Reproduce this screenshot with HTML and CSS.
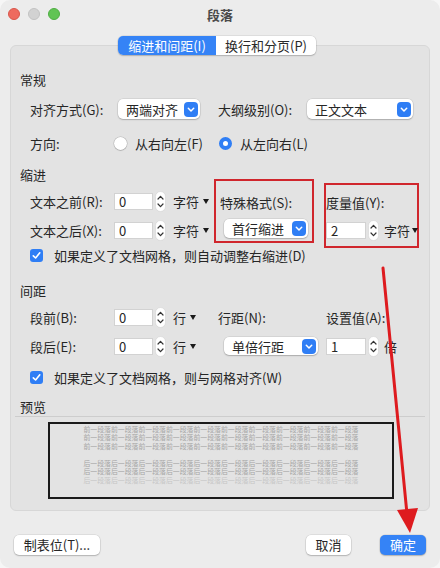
FILE: index.html
```html
<!DOCTYPE html>
<html lang="zh-CN">
<head>
    <meta charset="UTF-8">
    <meta name="viewport" content="width=device-width, initial-scale=1.0">
    <title>段落</title>
    <link rel="stylesheet" href="styles.css">
</head>
<body>
    <div class="window">
        <div class="titlebar">
            <div class="lights">
                <span class="light red"></span>
                <span class="light gray"></span>
                <span class="light green"></span>
            </div>
            <div class="title">段落</div>
            <div></div>
        </div>

        <div class="tabs">
            <div class="segmented">
                <span class="tab active">缩进和间距(I)</span>
                <span class="tab">换行和分页(P)</span>
            </div>
        </div>

        <div class="panel">
            <div class="heading first">常规</div>
            <div class="row">
                <span class="lbl">对齐方式(G):</span>
                <div class="select sel-align">
                    <span>两端对齐</span>
                    <svg class="sel-btn" width="14" height="15" viewBox="0 0 14 15"><rect width="14" height="15" rx="4" fill="#2f7ef5"/><path d="M4.3 6.3 L7 9 L9.7 6.3" fill="none" stroke="#fff" stroke-width="1.5" stroke-linecap="round" stroke-linejoin="round"/></svg>
                </div>
                <span class="lbl-mid">大纲级别(O):</span>
                <div class="select sel-outline">
                    <span>正文文本</span>
                    <svg class="sel-btn" width="14" height="15" viewBox="0 0 14 15"><rect width="14" height="15" rx="4" fill="#2f7ef5"/><path d="M4.3 6.3 L7 9 L9.7 6.3" fill="none" stroke="#fff" stroke-width="1.5" stroke-linecap="round" stroke-linejoin="round"/></svg>
                </div>
            </div>
            <div class="row row-dir">
                <span class="lbl">方向:</span>
                <label class="option opt-first"><span class="radio"></span>从右向左(F)</label>
                <label class="option"><span class="radio on"></span>从左向右(L)</label>
            </div>

            <div class="heading tight">缩进</div>
            <div class="indent">
                <div class="stack">
                    <div class="field">
                        <span class="lbl">文本之前(R):</span>
                        <span class="num">0</span>
                        <svg class="stepper" width="11" height="21" viewBox="0 0 11 21"><rect x="0.5" y="0.5" width="10" height="20" rx="5" fill="#fff" stroke="#d4d4d4" stroke-width="0.6"/><path d="M3 8 L5.5 5.3 L8 8" fill="none" stroke="#333" stroke-width="1.2" stroke-linecap="round" stroke-linejoin="round"/><path d="M3 13 L5.5 15.7 L8 13" fill="none" stroke="#333" stroke-width="1.2" stroke-linecap="round" stroke-linejoin="round"/></svg>
                        <span class="unit">字符</span><span class="caret"></span>
                    </div>
                    <div class="field">
                        <span class="lbl">文本之后(X):</span>
                        <span class="num">0</span>
                        <svg class="stepper" width="11" height="21" viewBox="0 0 11 21"><rect x="0.5" y="0.5" width="10" height="20" rx="5" fill="#fff" stroke="#d4d4d4" stroke-width="0.6"/><path d="M3 8 L5.5 5.3 L8 8" fill="none" stroke="#333" stroke-width="1.2" stroke-linecap="round" stroke-linejoin="round"/><path d="M3 13 L5.5 15.7 L8 13" fill="none" stroke="#333" stroke-width="1.2" stroke-linecap="round" stroke-linejoin="round"/></svg>
                        <span class="unit">字符</span><span class="caret"></span>
                    </div>
                </div>
                <div class="mark mark-special">
                    <div class="field">特殊格式(S):</div>
                    <div class="select sel-special">
                        <span>首行缩进</span>
                        <svg class="sel-btn" width="14" height="15" viewBox="0 0 14 15"><rect width="14" height="15" rx="4" fill="#2f7ef5"/><path d="M4.3 6.3 L7 9 L9.7 6.3" fill="none" stroke="#fff" stroke-width="1.5" stroke-linecap="round" stroke-linejoin="round"/></svg>
                    </div>
                </div>
                <div class="mark mark-value">
                    <div class="field">度量值(Y):</div>
                    <div class="field field-gap">
                        <span class="num num-wide">2</span>
                        <svg class="stepper" width="11" height="21" viewBox="0 0 11 21"><rect x="0.5" y="0.5" width="10" height="20" rx="5" fill="#fff" stroke="#d4d4d4" stroke-width="0.6"/><path d="M3 8 L5.5 5.3 L8 8" fill="none" stroke="#333" stroke-width="1.2" stroke-linecap="round" stroke-linejoin="round"/><path d="M3 13 L5.5 15.7 L8 13" fill="none" stroke="#333" stroke-width="1.2" stroke-linecap="round" stroke-linejoin="round"/></svg>
                        <span class="unit unit-tight">字符</span><span class="caret caret-tight"></span>
                    </div>
                </div>
            </div>
            <label class="check-row">
                <svg class="check" width="13" height="13" viewBox="0 0 13 13"><rect width="13" height="13" rx="3" fill="#2f7ef5"/><path d="M3.3 6.8 L5.6 9 L9.8 3.8" fill="none" stroke="#fff" stroke-width="1.6" stroke-linecap="round" stroke-linejoin="round"/></svg>
                如果定义了文档网格，则自动调整右缩进(D)
            </label>

            <div class="heading spaced">间距</div>
            <div class="spacing">
                <div class="stack">
                    <div class="field">
                        <span class="lbl">段前(B):</span>
                        <span class="num">0</span>
                        <svg class="stepper" width="11" height="21" viewBox="0 0 11 21"><rect x="0.5" y="0.5" width="10" height="20" rx="5" fill="#fff" stroke="#d4d4d4" stroke-width="0.6"/><path d="M3 8 L5.5 5.3 L8 8" fill="none" stroke="#333" stroke-width="1.2" stroke-linecap="round" stroke-linejoin="round"/><path d="M3 13 L5.5 15.7 L8 13" fill="none" stroke="#333" stroke-width="1.2" stroke-linecap="round" stroke-linejoin="round"/></svg>
                        <span class="unit">行</span><span class="caret"></span>
                    </div>
                    <div class="field">
                        <span class="lbl">段后(E):</span>
                        <span class="num">0</span>
                        <svg class="stepper" width="11" height="21" viewBox="0 0 11 21"><rect x="0.5" y="0.5" width="10" height="20" rx="5" fill="#fff" stroke="#d4d4d4" stroke-width="0.6"/><path d="M3 8 L5.5 5.3 L8 8" fill="none" stroke="#333" stroke-width="1.2" stroke-linecap="round" stroke-linejoin="round"/><path d="M3 13 L5.5 15.7 L8 13" fill="none" stroke="#333" stroke-width="1.2" stroke-linecap="round" stroke-linejoin="round"/></svg>
                        <span class="unit">行</span><span class="caret"></span>
                    </div>
                </div>
                <div class="stack col-line">
                    <div class="field">行距(N):</div>
                    <div class="field">
                        <div class="select sel-line">
                            <span>单倍行距</span>
                            <svg class="sel-btn" width="14" height="15" viewBox="0 0 14 15"><rect width="14" height="15" rx="4" fill="#2f7ef5"/><path d="M4.3 6.3 L7 9 L9.7 6.3" fill="none" stroke="#fff" stroke-width="1.5" stroke-linecap="round" stroke-linejoin="round"/></svg>
                        </div>
                    </div>
                </div>
                <div class="stack col-value">
                    <div class="field">设置值(A):</div>
                    <div class="field">
                        <span class="num num-wide">1</span>
                        <svg class="stepper" width="11" height="21" viewBox="0 0 11 21"><rect x="0.5" y="0.5" width="10" height="20" rx="5" fill="#fff" stroke="#d4d4d4" stroke-width="0.6"/><path d="M3 8 L5.5 5.3 L8 8" fill="none" stroke="#333" stroke-width="1.2" stroke-linecap="round" stroke-linejoin="round"/><path d="M3 13 L5.5 15.7 L8 13" fill="none" stroke="#333" stroke-width="1.2" stroke-linecap="round" stroke-linejoin="round"/></svg>
                        <span class="unit unit-tight">倍</span>
                    </div>
                </div>
            </div>
            <label class="check-row check-second">
                <svg class="check" width="13" height="13" viewBox="0 0 13 13"><rect width="13" height="13" rx="3" fill="#2f7ef5"/><path d="M3.3 6.8 L5.6 9 L9.8 3.8" fill="none" stroke="#fff" stroke-width="1.6" stroke-linecap="round" stroke-linejoin="round"/></svg>
                如果定义了文档网格，则与网格对齐(W)
            </label>

            <div class="heading preview-title">预览</div>
            <div class="divider"></div>
            <div class="preview">
                <!-- tiny sample text, fitted to the same width as the real preview -->
                <svg class="preview-text" width="342" height="73" viewBox="0 0 342 73">
                    <g text-anchor="middle" font-size="7" fill="#a6a6a6">
                        <text x="171" y="7.7" textLength="275" lengthAdjust="spacingAndGlyphs">前一段落前一段落前一段落前一段落前一段落前一段落前一段落前一段落前一段落前一段落</text>
                        <text x="171" y="16.2" textLength="275" lengthAdjust="spacingAndGlyphs">前一段落前一段落前一段落前一段落前一段落前一段落前一段落前一段落前一段落前一段落</text>
                        <text x="171" y="24.7" textLength="275" lengthAdjust="spacingAndGlyphs">前一段落前一段落前一段落前一段落前一段落前一段落前一段落前一段落前一段落前一段落</text>
                        <text x="171" y="41.7" textLength="275" lengthAdjust="spacingAndGlyphs">后一段落后一段落后一段落后一段落后一段落后一段落后一段落后一段落后一段落后一段落</text>
                        <text x="171" y="50.2" textLength="275" lengthAdjust="spacingAndGlyphs">后一段落后一段落后一段落后一段落后一段落后一段落后一段落后一段落后一段落后一段落</text>
                        <text x="171" y="58.7" textLength="275" lengthAdjust="spacingAndGlyphs" fill="#c6c6c6">后一段落后一段落后一段落后一段落后一段落后一段落后一段落后一段落后一段落后一段落</text>
                    </g>
                </svg>
            </div>
        </div>

        <div class="footer">
            <button class="btn btn-tabs">制表位(T)...</button>
            <span class="spacer"></span>
            <button class="btn btn-cancel">取消</button>
            <button class="btn btn-ok">确定</button>
        </div>

        <!-- red annotation arrow drawn over the dialog -->
        <svg class="annot" width="440" height="568" viewBox="0 0 440 568">
            <path d="M383 268 L407 514" stroke="#de1b1f" stroke-width="3" stroke-linecap="round"/>
            <polygon points="397,510 418,508 410,533" fill="#de1b1f"/>
        </svg>
    </div>
</body>
</html>
```

FILE: styles.css
```css
* {
    box-sizing: border-box;
}
body {
    margin: 0;
    background-color: #f6f6f6;
    font-family: "Noto Sans CJK SC", "Noto Sans", sans-serif;
    font-size: 13px;
    color: #262626;
}
.window {
    position: relative;
    width: 440px;
    height: 568px;
    background-color: #ececec;
    border-radius: 10px;
    overflow: hidden;
}
.titlebar {
    display: grid;
    grid-template-columns: 1fr auto 1fr;
    align-items: center;
    height: 28px;
}
.lights {
    display: flex;
    gap: 8px;
    padding-left: 8px;
}
.light {
    width: 12px;
    height: 12px;
    border-radius: 50%;
}
.red {
    background-color: #ee6a5f;
    border: 0.5px solid #d8564b;
}
.gray {
    background-color: #d2d2d2;
    border: 0.5px solid #c2c2c2;
}
.green {
    background-color: #61c454;
    border: 0.5px solid #4fae43;
}
.title {
    font-weight: bold;
    color: #4a4a4a;
}
.tabs {
    position: relative;
    z-index: 1;
    display: flex;
    margin-top: 8px;
    padding-left: 118px;
}
.segmented {
    display: flex;
    border-radius: 5px;
    overflow: hidden;
    background-color: #fff;
    box-shadow: 0 0 0 0.5px rgba(0, 0, 0, 0.12), 0 1px 1.5px rgba(0, 0, 0, 0.18);
}
.tab {
    height: 19px;
    line-height: 19px;
    width: 100px;
    text-align: center;
    color: #2a2a2a;
}
.tab.active {
    width: 98px;
    background-color: #3583f6;
    color: #fff;
}
.panel {
    margin: -10px 10px 0;
    padding: 0 0 11px 9px;
    background-color: #e3e3e3;
    border: 1px solid #d7d7d7;
    border-radius: 6px;
}
.heading {
    height: 22px;
    line-height: 22px;
}
.heading.first {
    margin-top: 23px;
}
.heading.tight {
    margin-top: 14px;
    height: 11px;
    line-height: 14px;
}
.heading.spaced {
    margin-top: 18px;
}
.heading.preview-title {
    margin-top: 14px;
    height: 18px;
    line-height: 18px;
}
.row {
    display: flex;
    align-items: center;
    height: 22px;
    margin-left: 10px;
    margin-top: 7px;
}
.row-dir {
    margin-top: 12px;
}
.lbl {
    width: 84px;
    flex-shrink: 0;
}
.lbl-mid {
    width: 89px;
    margin-left: 18px;
}
.select {
    display: flex;
    align-items: center;
    justify-content: space-between;
    height: 20px;
    padding: 0 2px 0 8px;
    background-color: #fff;
    border-radius: 5px;
    box-shadow: 0 0 0 0.5px rgba(0, 0, 0, 0.12), 0 1px 1.5px rgba(0, 0, 0, 0.2);
}
.sel-align {
    width: 82px;
    margin-left: 4px;
}
.sel-outline {
    width: 106px;
}
.sel-special {
    width: 84px;
    height: 19px;
    margin: 6px 0 0 4px;
}
.sel-line {
    width: 94px;
    height: 18px;
    margin-left: 6px;
}
.option {
    display: flex;
    align-items: center;
    gap: 8px;
}
.opt-first {
    width: 105px;
}
.radio {
    width: 13px;
    height: 13px;
    border-radius: 50%;
    background-color: #fff;
    box-shadow: 0 0 0 0.5px rgba(0, 0, 0, 0.2), 0 1px 1px rgba(0, 0, 0, 0.12);
}
.radio.on {
    border: 4px solid #2f7ef5;
    background-color: #fff;
    box-shadow: none;
}
.indent {
    display: grid;
    grid-template-columns: 184px 100px 105px;
    align-items: start;
    margin-left: 10px;
}
.stack {
    display: flex;
    flex-direction: column;
    gap: 7px;
}
.indent > .stack {
    padding-top: 11px;
}
.field {
    display: flex;
    align-items: center;
    height: 22px;
    white-space: nowrap;
}
.num {
    width: 39px;
    height: 17px;
    line-height: 16px;
    padding-left: 4px;
    background-color: #fff;
    border: 1px solid #d2d2d2;
    flex-shrink: 0;
}
.num-wide {
    width: 40px;
}
.stepper {
    margin-left: 2px;
    flex-shrink: 0;
}
.unit {
    margin-left: 7px;
    flex-shrink: 0;
}
.unit-tight {
    margin-left: 5px;
}
.caret {
    flex-shrink: 0;
    width: 0;
    height: 0;
    margin-left: 4px;
    border-left: 3px solid transparent;
    border-right: 3px solid transparent;
    border-top: 5px solid #1a1a1a;
}
.caret-tight {
    margin-left: 2px;
}
.mark {
    border: 2px solid #d0262d;
}
.mark-special {
    height: 64px;
    padding: 8px 0 0 4px;
}
.mark-special .field {
    margin-top: 2px;
}
.mark-value {
    height: 65px;
    margin: 4px 0 0 10px;
    padding-top: 6px;
}
.field-gap {
    margin-top: 6px;
}
.check-row {
    display: flex;
    align-items: center;
    gap: 11px;
    height: 14px;
    margin-left: 10px;
}
.check-second {
    margin-top: 13px;
}
.spacing {
    display: grid;
    grid-template-columns: 184px 110px 1fr;
    margin: 4px 0 0 10px;
}
.col-line {
    padding-left: 4px;
}
.col-value {
    padding-left: 2px;
}
.divider {
    height: 1px;
    margin: 0 4px 0 -5px;
    background-color: #cdcdcd;
}
.preview {
    width: 346px;
    height: 77px;
    margin: 5px 0 0 28px;
    border: 2px solid #1a1a1a;
}
.preview-text {
    display: block;
    font-family: "Noto Sans CJK SC", sans-serif;
}
.footer {
    display: flex;
    align-items: center;
    margin-top: 24px;
    padding: 0 14px;
}
.spacer {
    flex: 1;
}
.btn {
    height: 20px;
    padding: 0;
    border: none;
    border-radius: 5px;
    font: inherit;
    line-height: 20px;
    color: #262626;
    background-color: #fff;
    box-shadow: 0 0 0 0.5px rgba(0, 0, 0, 0.12), 0 1px 1.5px rgba(0, 0, 0, 0.2);
}
.btn-tabs {
    width: 86px;
}
.btn-cancel {
    width: 45px;
}
.btn-ok {
    width: 46px;
    margin-left: 29px;
    color: #fff;
    background-color: #3583f6;
}
.annot {
    position: absolute;
    top: 0;
    left: 0;
    pointer-events: none;
}
```
